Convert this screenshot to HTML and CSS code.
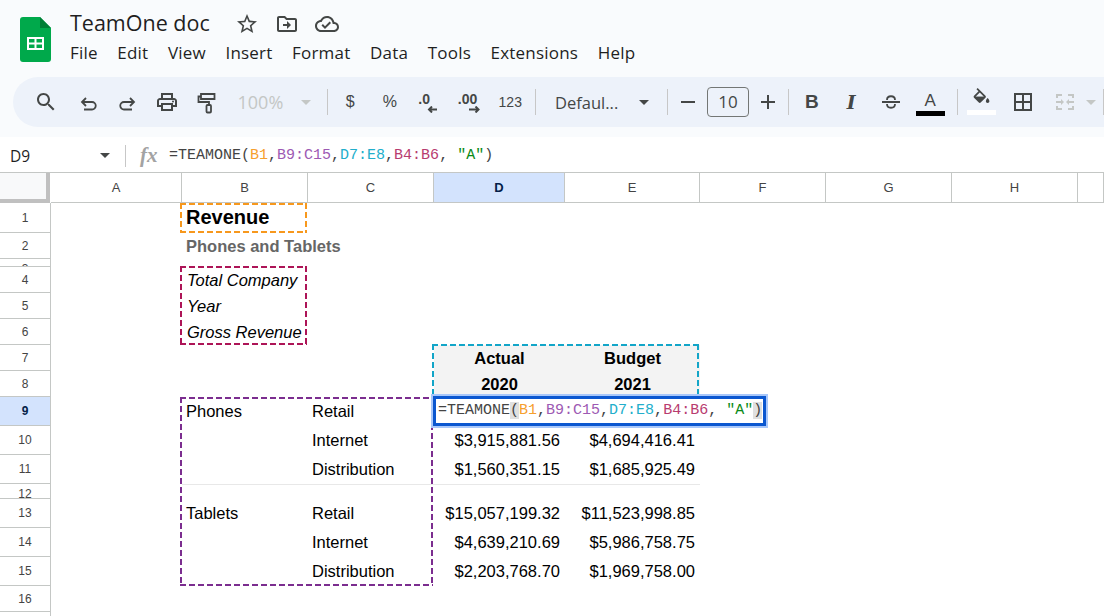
FILE: index.html
```html
<!DOCTYPE html>
<html lang="en">
<head>
    <meta charset="UTF-8">
    <title>TeamOne doc</title>
    <link rel="stylesheet" href="styles.css">
</head>
<body>
    <div class="top">
        <div class="titlebar">
            <svg class="logo" viewBox="0 0 31 45" width="31" height="45">
                <path d="M3 0H20L31 11V42a3 3 0 0 1-3 3H3a3 3 0 0 1-3-3V3a3 3 0 0 1 3-3z" fill="#00a94b"/>
                <path d="M20 0L31 11H20z" fill="#007f36"/>
                <path d="M7 20H24V33H7zM9 22V25.500H14.500V22zM16.500 22V25.500H22V22zM9 27.500V31H14.500V27.500zM16.500 27.500V31H22V27.500z" fill="#fff" fill-rule="evenodd"/>
            </svg>
            <div class="titleinfo">
                <div class="docname">
                    <span class="docname-text">TeamOne doc</span>
                    <svg class="icon star" viewBox="0 0 24 24"><path d="M22 9.240l-7.190-.620L12 2 9.190 8.630 2 9.240l5.460 4.730L5.820 21 12 17.270 18.180 21l-1.630-7.030L22 9.240zM12 15.400l-3.760 2.270 1-4.280-3.320-2.880 4.380-.380L12 6.100l1.710 4.040 4.380.380-3.320 2.880 1 4.280L12 15.400z"/></svg>
                    <svg class="icon folder" viewBox="0 0 24 24"><path d="M20 6h-8l-2-2H4c-1.100 0-2 .900-2 2v12c0 1.100.900 2 2 2h16c1.100 0 2-.900 2-2V8c0-1.100-.900-2-2-2zm0 12H4V6h5.170l2 2H20v10zM12 17l4-4-4-4v3H8v2h4v3z"/></svg>
                    <svg class="icon cloud" viewBox="0 0 24 24"><path d="M19.350 10.040C18.670 6.590 15.640 4 12 4 9.110 4 6.600 5.640 5.350 8.040 2.340 8.360 0 10.910 0 14c0 3.310 2.690 6 6 6h13c2.760 0 5-2.240 5-5 0-2.640-2.050-4.780-4.650-4.960zM19 18H6c-2.210 0-4-1.790-4-4 0-2.050 1.530-3.760 3.560-3.970l1.070-.110.500-.950C8.080 7.140 9.940 6 12 6c2.620 0 4.880 1.860 5.390 4.430l.300 1.500 1.530.110c1.560.100 2.780 1.410 2.780 2.960 0 1.650-1.350 3-3 3zm-9-3.820l-2.090-2.090L6.500 13.500 10 17l6.010-6.010-1.410-1.410z"/></svg>
                </div>
                <div class="menu">
                    <span>File</span><span>Edit</span><span>View</span><span>Insert</span><span>Format</span><span>Data</span><span>Tools</span><span>Extensions</span><span>Help</span>
                </div>
            </div>
        </div>

        <div class="toolbar">
            <div class="btn btn-search"><svg class="icon" viewBox="0 0 24 24"><path d="M15.500 14h-.790l-.280-.270C15.410 12.590 16 11.110 16 9.500 16 5.910 13.090 3 9.500 3S3 5.910 3 9.500 5.910 16 9.500 16c1.610 0 3.090-.590 4.230-1.570l.270.280v.790l5 4.990L20.490 19l-4.990-5zm-6 0C7.010 14 5 11.990 5 9.500S7.010 5 9.500 5 14 7.010 14 9.500 11.990 14 9.500 14z"/></svg></div>
            <div class="btn"><svg class="icon line" viewBox="0 0 24 24"><path d="M10 8L6 12l4 4M6.500 12H16a3.750 3.750 0 0 1 0 7.500H8"/></svg></div>
            <div class="btn"><svg class="icon line" viewBox="0 0 24 24"><path d="M14 8l4 4-4 4M17.500 12H8a3.750 3.750 0 0 0 0 7.500h8"/></svg></div>
            <div class="btn"><svg class="icon" viewBox="0 0 24 24"><path d="M19 8h-1V3H6v5H5c-1.660 0-3 1.340-3 3v6h4v4h12v-4h4v-6c0-1.660-1.340-3-3-3zM8 5h8v3H8V5zm8 12v2H8v-4h8v2zm2-2v-2H6v2H4v-4c0-.550.450-1 1-1h14c.550 0 1 .450 1 1v4h-2z"/><circle cx="18" cy="11.500" r="1"/></svg></div>
            <div class="btn"><svg class="icon line" viewBox="0 0 24 24"><path d="M6 4h13.500v5H6zM6 6.500H3.500V12H14v3"/><rect x="11.500" y="15" width="4.500" height="7.500" rx="1"/></svg></div>
            <div class="zoom"><span>100%</span><i class="caret caret-off"></i></div>
            <div class="sep sep-zoom"></div>
            <div class="btn btn-text">$</div>
            <div class="btn btn-text">%</div>
            <div class="btn">
                <div class="decimal">
                    <span>.0</span>
                    <svg viewBox="0 0 14 7" width="14" height="7"><path class="arrow" d="M11 3.500H3M6 .500L3 3.500 6 6.500"/></svg>
                </div>
            </div>
            <div class="btn">
                <div class="decimal">
                    <span>.00</span>
                    <svg viewBox="0 0 14 7" width="14" height="7"><path class="arrow" d="M3 3.500H12.500M9.500 .500L12.500 3.500 9.500 6.500"/></svg>
                </div>
            </div>
            <div class="btn btn-num">123</div>
            <div class="sep sep-num"></div>
            <div class="fontpick"><span>Defaul...</span><i class="caret"></i></div>
            <div class="sep"></div>
            <div class="btn btn-minus"><svg class="icon" viewBox="0 0 24 24"><path d="M5 11h14v2H5z"/></svg></div>
            <div class="sizebox">10</div>
            <div class="btn btn-plus"><svg class="icon" viewBox="0 0 24 24"><path d="M19 13h-6v6h-2v-6H5v-2h6V5h2v6h6z"/></svg></div>
            <div class="sep sep-size"></div>
            <div class="btn btn-bold">B</div>
            <div class="btn btn-italic">I</div>
            <div class="btn"><svg class="icon line" viewBox="0 0 24 24"><path d="M3 12h18M8 10C8 5 16 5 16 10M8 14c0 5 8 5 8 0"/></svg></div>
            <div class="btn">
                <div class="colorbtn">
                    <span>A</span>
                    <i class="swatch swatch-black"></i>
                </div>
            </div>
            <div class="sep sep-color"></div>
            <div class="btn">
                <div class="colorbtn fillbtn">
                    <svg class="icon" viewBox="0 0 24 24"><path d="M16.560 8.940L7.620 0 6.210 1.410l2.380 2.380-5.150 5.150c-.590.590-.590 1.540 0 2.120l5.500 5.500c.290.290.680.440 1.060.440s.770-.150 1.060-.440l5.500-5.500c.590-.580.590-1.530 0-2.120zM5.210 10L10 5.210 14.790 10H5.210zM19 11.500s-2 2.170-2 3.500c0 1.100.900 2 2 2s2-.900 2-2c0-1.330-2-3.500-2-3.500z"/><path d="M5 10h10l-5 5z"/></svg>
                    <i class="swatch swatch-white"></i>
                </div>
            </div>
            <div class="btn btn-borders"><svg class="icon" viewBox="0 0 24 24"><path d="M3 3v18h18V3H3zm8 16H5v-6h6v6zm0-8H5V5h6v6zm8 8h-6v-6h6v6zm0-8h-6V5h6v6z"/></svg></div>
            <div class="merge">
                <svg class="icon off" viewBox="0 0 24 24"><path d="M3 8V4h6v2H5v2zM21 8V4h-6v2h4v2zM3 16v4h6v-2H5v-2zM21 16v4h-6v-2h4v-2zM3 11h5V9l3 3-3 3v-2H3zM21 11h-5V9l-3 3 3 3v-2h5z"/></svg>
                <i class="caret caret-off"></i>
            </div>
            <div class="sep"></div>
        </div>
    </div>

    <div class="formulabar">
        <div class="namebox"><span>D9</span><i class="caret"></i></div>
        <div class="sep sep-formula"></div>
        <span class="fx">fx</span>
        <div class="formula mono">=TEAMONE(<span class="f-orange">B1</span>,<span class="f-purple">B9:C15</span>,<span class="f-cyan">D7:E8</span>,<span class="f-red">B4:B6</span>, <span class="f-green">"A"</span>)</div>
    </div>

    <div class="sheet">
        <div class="corner"></div>
        <div class="colhead">A</div>
        <div class="colhead">B</div>
        <div class="colhead">C</div>
        <div class="colhead active">D</div>
        <div class="colhead">E</div>
        <div class="colhead">F</div>
        <div class="colhead">G</div>
        <div class="colhead">H</div>
        <div class="colhead"></div>

        <div class="rowhead">1</div>
        <div class="rowhead">2</div>
        <div class="rowhead thin">3</div>
        <div class="rowhead">4</div>
        <div class="rowhead">5</div>
        <div class="rowhead">6</div>
        <div class="rowhead">7</div>
        <div class="rowhead">8</div>
        <div class="rowhead active">9</div>
        <div class="rowhead">10</div>
        <div class="rowhead">11</div>
        <div class="rowhead thin">12</div>
        <div class="rowhead">13</div>
        <div class="rowhead">14</div>
        <div class="rowhead">15</div>
        <div class="rowhead">16</div>
        <div class="rowhead">17</div>

        <div class="cell r1 cb title">Revenue</div>
        <div class="cell r2 cb subtitle">Phones and Tablets</div>

        <div class="cell r4 cb em">Total Company</div>
        <div class="cell r5 cb em">Year</div>
        <div class="cell r6 cb em">Gross Revenue</div>

        <div class="headfill"></div>
        <div class="cell r7 cd head">Actual</div>
        <div class="cell r7 ce head">Budget</div>
        <div class="cell r8 cd head">2020</div>
        <div class="cell r8 ce head">2021</div>

        <div class="cell r9 cb">Phones</div>
        <div class="cell r9 cc">Retail</div>
        <div class="cell r10 cc">Internet</div>
        <div class="cell r10 cd num">$3,915,881.56</div>
        <div class="cell r10 ce num">$4,694,416.41</div>
        <div class="cell r11 cc">Distribution</div>
        <div class="cell r11 cd num">$1,560,351.15</div>
        <div class="cell r11 ce num">$1,685,925.49</div>

        <div class="rule"></div>

        <div class="cell r13 cb">Tablets</div>
        <div class="cell r13 cc">Retail</div>
        <div class="cell r13 cd num">$15,057,199.32</div>
        <div class="cell r13 ce num">$11,523,998.85</div>
        <div class="cell r14 cc">Internet</div>
        <div class="cell r14 cd num">$4,639,210.69</div>
        <div class="cell r14 ce num">$5,986,758.75</div>
        <div class="cell r15 cc">Distribution</div>
        <div class="cell r15 cd num">$2,203,768.70</div>
        <div class="cell r15 ce num">$1,969,758.00</div>

        <div class="range range-orange"></div>
        <div class="range range-red"></div>
        <div class="range range-cyan"></div>
        <div class="range range-purple"></div>

        <div class="editor mono">=TEAMONE<span class="paren">(</span><span class="f-orange">B1</span>,<span class="f-purple">B9:C15</span>,<span class="f-cyan">D7:E8</span>,<span class="f-red">B4:B6</span>, <span class="f-green">"A"</span><span class="paren">)</span></div>
    </div>
</body>
</html>
```

FILE: styles.css
```css
* {
    box-sizing: border-box;
}
html, body {
    margin: 0;
    height: 616px;
    overflow: hidden;
    background: #fff;
}
body {
    font-family: "Liberation Sans", Arial, sans-serif;
    color: #000;
}
.icon {
    display: block;
    width: 24px;
    height: 24px;
    fill: #444746;
    flex: none;
}
.icon.line,
.icon.line path,
.icon.line rect {
    fill: none;
    stroke: #444746;
    stroke-width: 1.800;
}
.icon.off {
    fill: #c4c7c5;
}
.caret {
    display: block;
    width: 0;
    height: 0;
    border-left: 5px solid transparent;
    border-right: 5px solid transparent;
    border-top: 5px solid #444746;
}
.caret-off {
    border-top-color: #c4c7c5;
}
.sep {
    width: 1px;
    height: 26px;
    background: #c7c7c7;
    flex: none;
}
.mono {
    font-family: "Liberation Mono", "Courier New", monospace;
    font-size: 15px;
    white-space: pre;
    color: #444;
}

/* top of the page */
.top {
    height: 137px;
    background: #f9fbfd;
    padding-top: 10px;
}
.titlebar {
    display: flex;
    height: 67px;
    padding: 7px 0 0 20px;
}
.logo {
    flex: none;
}
.titleinfo {
    margin-left: 19px;
    margin-top: -7px;
}
.docname {
    display: flex;
    align-items: center;
    height: 28px;
}
.docname-text {
    font-family: "Open Sans", sans-serif;
    font-size: 21.500px;
    line-height: 26px;
    margin-top: -2px;
    color: #1f1f1f;
    width: 165px;
}
.docname .folder {
    margin-left: 16px;
}
.docname .cloud {
    margin-left: 16px;
}
.menu {
    display: flex;
    margin-top: 4px;
    font-family: "Open Sans", sans-serif;
    font-size: 17px;
    letter-spacing: .2px;
    line-height: 22px;
    color: #1f1f1f;
}
.menu span {
    margin-right: 19.600px;
}

/* toolbar */
.toolbar {
    display: flex;
    align-items: center;
    height: 50px;
    margin-left: 13px;
    padding-left: 13px;
    background: #edf2fa;
    border-radius: 25px 0 0 25px;
    font-family: "Open Sans", sans-serif;
    color: #444746;
}
.btn {
    display: flex;
    align-items: center;
    justify-content: center;
    width: 39.500px;
    height: 40px;
    flex: none;
}
.btn-search {
    margin-right: 3px;
}
.btn-text {
    font-family: "Liberation Sans", sans-serif;
    font-size: 16px;
}
.btn-num {
    font-family: "Liberation Sans", sans-serif;
    font-size: 14px;
    margin-left: 2px;
}
.btn-bold {
    font-family: "Liberation Sans", sans-serif;
    font-weight: bold;
    font-size: 19px;
}
.btn-italic {
    font-family: "DejaVu Serif", serif;
    font-style: italic;
    font-weight: bold;
    font-size: 19px;
}
.btn-borders {
    margin-left: 1.500px;
}
.zoom {
    display: flex;
    align-items: center;
    width: 100px;
    padding-left: 11px;
    font-size: 18px;
    color: #c4c7c5;
    flex: none;
}
.zoom .caret {
    margin-left: 18px;
}
.sep-zoom {
    margin-right: 3px;
}
.sep-num {
    margin-left: 5px;
}
.decimal {
    display: flex;
    flex-direction: column;
    width: 22px;
    font-family: "Liberation Sans", sans-serif;
    font-size: 14px;
    font-weight: bold;
    line-height: 13px;
    margin-top: 2px;
}
.decimal svg {
    align-self: flex-end;
}
.arrow {
    fill: none;
    stroke: #444746;
    stroke-width: 2;
}
.fontpick {
    display: flex;
    align-items: center;
    width: 131px;
    padding-left: 19px;
    font-size: 16.500px;
    flex: none;
}
.fontpick .caret {
    margin-left: 21px;
}
.btn-minus {
    width: 39px;
}
.sizebox {
    width: 42px;
    height: 30px;
    border: 1px solid #747775;
    border-radius: 4px;
    text-align: center;
    font-size: 17px;
    line-height: 28px;
    flex: none;
}
.btn-plus {
    width: 38px;
}
.sep-size {
    margin-left: 1px;
    margin-right: 3px;
}
.colorbtn {
    display: flex;
    flex-direction: column;
    align-items: center;
    font-family: "Liberation Sans", sans-serif;
    font-size: 17px;
    line-height: 20px;
    margin-top: 2px;
}
.swatch {
    display: block;
    width: 29px;
    height: 5px;
}
.swatch-black {
    background: #000;
}
.swatch-white {
    background: #fff;
}
.fillbtn {
    margin-top: -2px;
}
.fillbtn .icon {
    width: 21px;
    height: 21px;
    margin-bottom: 1px;
}
.sep-color {
    margin-left: 7px;
    margin-right: 4px;
}
.merge {
    display: flex;
    align-items: center;
    width: 60px;
    padding-left: 10px;
    flex: none;
}
.merge .caret {
    margin-left: 9px;
}

/* formula bar */
.formulabar {
    display: flex;
    align-items: center;
    height: 35px;
    background: #fff;
    padding-top: 2px;
}
.namebox {
    display: flex;
    align-items: center;
    width: 125px;
    padding: 0 15px 0 10px;
    justify-content: space-between;
    font-size: 15.500px;
    font-family: "Open Sans", sans-serif;
    color: #1f1f1f;
    flex: none;
}
.sep-formula {
    height: 22px;
}
.fx {
    width: 43px;
    padding-left: 14px;
    font-family: "Liberation Serif", serif;
    font-style: italic;
    font-weight: bold;
    font-size: 21px;
    color: #a3a3a3;
    flex: none;
}
.f-orange { color: #f6a02d; }
.f-purple { color: #9d59b3; }
.f-cyan { color: #22aecb; }
.f-red { color: #b83b6f; }
.f-green { color: #0a8a16; }

/* the sheet */
.sheet {
    display: grid;
    grid-template-columns: 51px 131px 126px 126px 131px 135px 126px 126px 126px 26px;
    grid-template-rows: 30px 30px 26px 8px 26px 26px 26px 26px 26px 29px 29px 29px 15px 29px 29px 29px 26px 26px;
    border-top: 1px solid #c4c7c5;
    font-size: 16.500px;
}
.corner {
    background: #f8f9fa;
    border-right: 4px solid #c0c0c0;
    border-bottom: 4px solid #c0c0c0;
    margin-right: 1px;
}
.colhead {
    display: flex;
    align-items: center;
    justify-content: center;
    border-right: 1px solid #c4c7c5;
    border-bottom: 1px solid #c4c7c5;
    font-size: 13px;
    color: #444;
}
.rowhead {
    grid-column: 1;
    display: flex;
    align-items: center;
    justify-content: center;
    border-right: 1px solid #c4c7c5;
    border-bottom: 1px solid #c4c7c5;
    font-size: 12px;
    color: #444;
}
.rowhead.thin {
    align-items: flex-start;
    padding-top: 3px;
    overflow: hidden;
}
.active {
    background: #d3e3fd;
    color: #041e49;
    font-weight: bold;
}

.cell {
    display: flex;
    align-items: center;
    padding: 0 4px;
    white-space: nowrap;
    z-index: 1;
}
.r1 { grid-row: 2; }
.r2 { grid-row: 3; }
.r4 { grid-row: 5; }
.r5 { grid-row: 6; }
.r6 { grid-row: 7; }
.r7 { grid-row: 8; }
.r8 { grid-row: 9; }
.r9 { grid-row: 10; }
.r10 { grid-row: 11; }
.r11 { grid-row: 12; }
.r13 { grid-row: 14; }
.r14 { grid-row: 15; }
.r15 { grid-row: 16; }
.cb { grid-column: 3; }
.cc { grid-column: 4; }
.cd { grid-column: 5; }
.ce { grid-column: 6; }
.title {
    font-size: 20px;
    font-weight: bold;
    padding-bottom: 2px;
}
.subtitle {
    font-weight: bold;
    color: #666;
}
.em {
    font-style: italic;
    padding-left: 5px;
}
.head {
    justify-content: center;
    font-weight: bold;
}
.num {
    justify-content: flex-end;
    padding-right: 5px;
}
.headfill {
    grid-column: 5 / 7;
    grid-row: 8 / 10;
    background: #f3f3f3;
}
.rule {
    grid-column: 3 / 7;
    grid-row: 13;
    height: 1px;
    background: #e8e8e8;
}

/* dashed outlines of the ranges: 6 on, 3 off */
.range {
    --h: repeating-linear-gradient(90deg, var(--c) 0 6px, transparent 6px 9px);
    --v: repeating-linear-gradient(180deg, var(--c) 0 6px, transparent 6px 9px);
    background:
        var(--h) top / 100% 2px no-repeat,
        var(--h) bottom / 100% 2px no-repeat,
        var(--v) left / 2px 100% no-repeat,
        var(--v) right / 2px 100% no-repeat;
    margin: 0 1px 0 -2px;
    z-index: 2;
}
.range-orange {
    --c: #f7981d;
    grid-column: 3;
    grid-row: 2;
}
.range-red {
    --c: #ad1457;
    grid-column: 3;
    grid-row: 5 / 8;
    margin-top: -1px;
}
.range-cyan {
    --c: #12a5c8;
    grid-column: 5 / 7;
    grid-row: 8 / 10;
    margin-top: -1px;
}
.range-purple {
    --c: #7b2d8f;
    grid-column: 3 / 5;
    grid-row: 10 / 17;
}
.editor {
    grid-column: 5;
    grid-row: 10;
    z-index: 3;
    width: 333px;
    height: 30px;
    margin: -1px 0 0 -1px;
    padding-left: 2px;
    background: #fff;
    border: 3px solid #0b57d0;
    outline: 2px solid #a8c7fa;
    line-height: 24px;
}
.paren {
    background: #e0e0e0;
}
```
